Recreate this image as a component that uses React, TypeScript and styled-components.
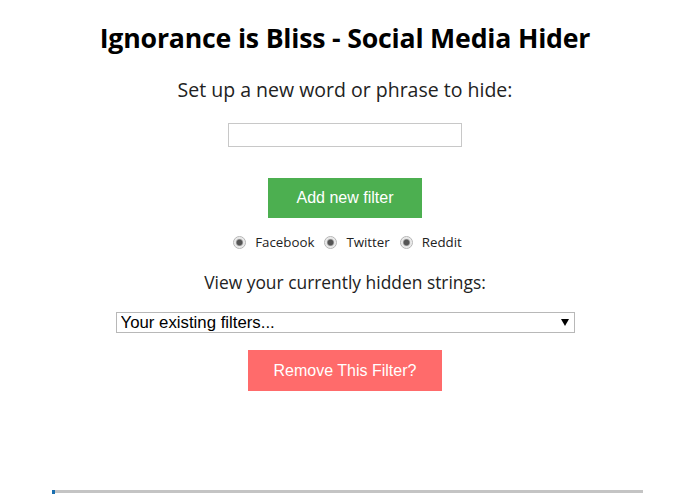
import styled, {createGlobalStyle} from "styled-components";

const GlobalStyle = createGlobalStyle`
  html, body {
    margin: 0;
    padding: 0;
    background: #fff;
  }
  body {
    font-family: "Open Sans", "Noto Sans", sans-serif;
    color: #000;
  }
`;

const Page = styled.div`
  width: 690px;
  height: 494px;
  display: flex;
  flex-direction: column;
  align-items: center;
  box-sizing: border-box;
  padding-top: 19px;
  overflow: hidden;
`;

const Title = styled.h1`
  font-size: 26.7px;
  font-weight: 700;
  margin: 0;
  line-height: 38px;
  letter-spacing: -0.2px;
`;

const Prompt = styled.p<{ $size: number; $top: number }>`
  margin: ${p => p.$top}px 0 0;
  font-size: ${p => p.$size}px;
  line-height: 24px;
  color: #222;
`;

const TextInput = styled.input`
  margin-top: 21px;
  width: 234px;
  height: 24px;
  box-sizing: border-box;
  border: 1px solid #c8c8c8;
  outline: none;
`;

const Button = styled.button<{ $bg: string; $w: number; $h: number; $top: number }>`
  margin-top: ${p => p.$top}px;
  width: ${p => p.$w}px;
  height: ${p => p.$h}px;
  background: ${p => p.$bg};
  color: #fff;
  border: none;
  padding: 0;
  font-family: "Liberation Sans", Arial, sans-serif;
  font-size: 16px;
  cursor: pointer;
`;

const RadioRow = styled.div`
  margin-top: 15px;
  margin-left: 5px;
  display: flex;
  align-items: center;
  gap: 10px;
  font-size: 13.3px;
  color: #222;
`;

const RadioLabel = styled.label`
  display: flex;
  align-items: center;
  gap: 9px;
`;

const Radio = styled.input`
  appearance: none;
  margin: 0;
  width: 13px;
  height: 13px;
  border-radius: 50%;
  border: 1px solid #b5b5b5;
  background: radial-gradient(circle, #555 0 2.5px, #888 3px, #e4e4e4 4px, #f4f4f4 6px);
  box-sizing: border-box;
`;

const SelectWrap = styled.div`
  position: relative;
  display: flex;
  margin-top: 18px;
`;

const Select = styled.select`
  width: 459px;
  height: 21px;
  box-sizing: border-box;
  border: 1px solid #b8b8b8;
  background: #fff;
  font-family: "Liberation Sans", Arial, sans-serif;
  font-size: 16.8px;
  line-height: 19px;
  padding: 0 0 0 4px;
  appearance: none;
  color: #000;
`;

const Caret = styled.span`
  position: absolute;
  right: 6px;
  top: 7px;
  width: 0;
  height: 0;
  border-left: 4px solid transparent;
  border-right: 4px solid transparent;
  border-top: 7px solid #000;
  pointer-events: none;
`;

const Track = styled.div`
  margin-top: auto;
  margin-bottom: 1px;
  margin-left: 5px;
  width: 591px;
  height: 3px;
  background: #c4c4c4;
  display: flex;
  align-items: center;
`;

const Thumb = styled.div`
  width: 3px;
  height: 5px;
  background: #1a6fb0;
  margin-top: 2px;
`;

export default function App() {
    return (
        <Page>
            <GlobalStyle/>
            <Title>Ignorance is Bliss - Social Media Hider</Title>
            <Prompt $size={19.5} $top={21}>Set up a new word or phrase to hide:</Prompt>
            <TextInput type="text"/>
            <Button $bg="#4caf50" $w={154} $h={40} $top={31}>Add new filter</Button>
            <RadioRow>
                <RadioLabel><Radio type="radio" name="site"/>Facebook</RadioLabel>
                <RadioLabel><Radio type="radio" name="site"/>Twitter</RadioLabel>
                <RadioLabel><Radio type="radio" name="site"/>Reddit</RadioLabel>
            </RadioRow>
            <Prompt $size={17.4} $top={19}>View your currently hidden strings:</Prompt>
            <SelectWrap>
                <Select defaultValue="none">
                    <option value="none">Your existing filters...</option>
                </Select>
                <Caret/>
            </SelectWrap>
            <Button $bg="#ff6b6b" $w={194} $h={41} $top={17}>Remove This Filter?</Button>
            <Track><Thumb/></Track>
        </Page>
    );
}
